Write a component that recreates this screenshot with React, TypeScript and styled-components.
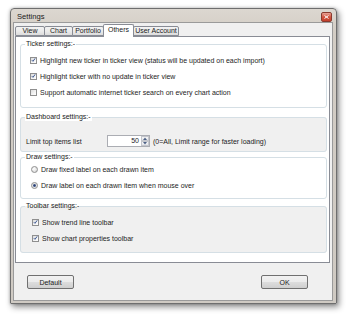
import React from 'react';
import styled, { createGlobalStyle } from 'styled-components';

const GlobalStyle = createGlobalStyle`
  html, body {
    margin: 0;
    padding: 0;
    background: #ffffff;
  }
  body {
    font-family: "Liberation Sans", Arial, sans-serif;
    color: #1c1c1c;
  }
`;

const FONT = '7px';

const Stage = styled.div`
  width: 350px;
  height: 319px;
  box-sizing: border-box;
  padding: 8px 0 0 10px;
  background: #ffffff;
  overflow: hidden;
`;

const Window = styled.div`
  width: 327px;
  height: 296px;
  box-sizing: border-box;
  display: flex;
  flex-direction: column;
  border: 1px solid #6e6e6e;
  border-radius: 4px 4px 1px 1px;
  background: linear-gradient(180deg, #dcd7d0 0%, #d3cdc5 8%, #cfcac3 100%);
  box-shadow: 2px 3px 6px rgba(0, 0, 0, 0.45), 0 0 3px rgba(0, 0, 0, 0.25);
  padding: 0 3px 2px 2px;
`;

const TitleBar = styled.div`
  height: 13px;
  display: flex;
  align-items: center;
  justify-content: space-between;
  padding: 0 0 0 4px;
`;

const Title = styled.span`
  font-size: 7.6px;
  color: #1a1a1a;
  padding-top: 2px;
`;

const CloseButton = styled.div`
  width: 9px;
  height: 8px;
  margin-top: 3px;
  margin-right: 1px;
  border: 1px solid #8a3a2e;
  border-radius: 2px;
  background: linear-gradient(180deg, #e8a396 0%, #d2543f 50%, #c4402c 100%);
  display: flex;
  align-items: center;
  justify-content: center;
`;

const Client = styled.div`
  flex: 1;
  display: flex;
  flex-direction: column;
  background: #f0f0f0;
  border: 1px solid #9a9a9a;
  padding: 1px 2px 0 1px;
`;

const TabRow = styled.div`
  height: 13px;
  display: flex;
  align-items: flex-start;
  margin-bottom: -1px;
  padding-left: 1px;
`;

const Tab = styled.div<{ $active?: boolean; $width: number }>`
  position: relative;
  z-index: ${p => (p.$active ? 1 : 0)};
  box-sizing: border-box;
  width: ${p => p.$width}px;
  height: ${p => (p.$active ? 13 : 10)}px;
  margin-top: ${p => (p.$active ? 0 : 2)}px;
  margin-left: -1px;
  border: 1px solid #898c95;
  border-bottom: ${p => (p.$active ? 'none' : '1px solid #898c95')};
  border-radius: 2px 2px 0 0;
  background: ${p =>
    p.$active ? '#ffffff' : 'linear-gradient(180deg, #f3f3f3 0%, #ebebeb 50%, #dcdcdc 100%)'};
  font-size: ${FONT};
  line-height: 8px;
  display: flex;
  justify-content: center;
  padding-top: ${p => (p.$active ? 1 : 0)}px;
  color: #1a1a1a;
  white-space: nowrap;
`;

const Panel = styled.div`
  height: 227px;
  box-sizing: border-box;
  background: #ffffff;
  border: 1px solid #898c95;
  padding: 3px 2px 0 4px;
  display: flex;
  flex-direction: column;
`;

const Group = styled.fieldset<{ $grey?: boolean; $height: number; $top: number }>`
  box-sizing: border-box;
  height: ${p => p.$height}px;
  margin: ${p => p.$top}px 0 0 0;
  min-width: 0;
  padding: 0;
  border: 1px solid #d5dfe5;
  border-radius: 3px;
  background: ${p => (p.$grey ? '#f0f0f0' : '#ffffff')};
  display: flex;
  flex-direction: column;
`;

const Legend = styled.legend<{ $white?: boolean }>`
  font-size: ${FONT};
  line-height: 8px;
  height: 8px;
  padding: 0 1px;
  margin-left: 4px;
  background: ${p => (p.$white ? '#ffffff' : 'transparent')};
  color: #1a1a1a;
`;

const Rows = styled.div<{ $pt: number; $pl: number }>`
  display: flex;
  flex-direction: column;
  gap: 8px;
  padding: ${p => p.$pt}px 0 0 ${p => p.$pl}px;
`;

const Row = styled.div`
  height: 8px;
  display: flex;
  align-items: center;
  gap: 3px;
  font-size: ${FONT};
  white-space: nowrap;
`;

const Box = styled.span`
  width: 7px;
  height: 7px;
  box-sizing: border-box;
  border: 1px solid #8f8f8f;
  background: linear-gradient(135deg, #dcdcdc 0%, #f4f4f4 60%, #ffffff 100%);
  display: flex;
  align-items: center;
  justify-content: center;
  flex-shrink: 0;
`;

const RadioDot = styled.span<{ $on?: boolean }>`
  width: 7px;
  height: 7px;
  box-sizing: border-box;
  border-radius: 50%;
  border: 1px solid #8f8f8f;
  background: ${p =>
    p.$on
      ? 'radial-gradient(circle, #2d3f6a 0%, #4b6296 35%, #dedede 45%, #f6f6f6 100%)'
      : 'radial-gradient(circle at 35% 35%, #ffffff 0%, #e2e2e2 60%, #cfcfcf 100%)'};
  flex-shrink: 0;
  margin-left: 1px;
`;

const LimitRow = styled.div`
  display: flex;
  align-items: center;
  font-size: ${FONT};
  white-space: nowrap;
  padding: 14px 0 0 5px;
`;

const LimitLabel = styled.span`
  width: 81px;
`;

const Spinner = styled.div`
  width: 43px;
  height: 12px;
  box-sizing: border-box;
  border: 1px solid #abadb3;
  background: #ffffff;
  display: flex;
  margin-right: 3px;
`;

const SpinValue = styled.span`
  flex: 1;
  text-align: right;
  padding-right: 2px;
  font-size: ${FONT};
  line-height: 10px;
`;

const SpinButtons = styled.div`
  width: 8px;
  display: flex;
  flex-direction: column;
`;

const SpinButton = styled.div`
  flex: 1;
  border: 1px solid #c4c6cc;
  background: linear-gradient(180deg, #f6f6f6, #e3e5ea);
  display: flex;
  align-items: center;
  justify-content: center;
`;

const ButtonBar = styled.div`
  flex: 1;
  display: flex;
  justify-content: space-between;
  align-items: flex-start;
  padding: 12px 22px 0 12px;
`;

const PushButton = styled.button`
  width: 47px;
  height: 14px;
  box-sizing: border-box;
  border: 1px solid #707070;
  border-radius: 2px;
  background: linear-gradient(180deg, #f2f2f2 0%, #ebebeb 50%, #dddddd 51%, #cfcfcf 100%);
  font-family: "Liberation Sans", Arial, sans-serif;
  font-size: ${FONT};
  color: #1a1a1a;
  padding: 0;
`;

const Check = () => (
  <svg width="6" height="6" viewBox="0 0 6 6">
    <path d="M1 3.2 L2.4 4.6 L5 1" fill="none" stroke="#3d5790" strokeWidth="1.2" />
  </svg>
);

const CheckItem: React.FC<{ checked?: boolean; label: string }> = ({ checked, label }) => (
  <Row>
    <Box>{checked && <Check />}</Box>
    <span>{label}</span>
  </Row>
);

const RadioItem: React.FC<{ on?: boolean; label: string }> = ({ on, label }) => (
  <Row>
    <RadioDot $on={on} />
    <span>{label}</span>
  </Row>
);

const Arrow = ({ up }: { up?: boolean }) => (
  <svg width="4" height="3" viewBox="0 0 4 3">
    <path d={up ? 'M0 3 L2 0.5 L4 3 Z' : 'M0 0 L2 2.5 L4 0 Z'} fill="#4d6185" />
  </svg>
);

const tabs = [
  { label: 'View', width: 30 },
  { label: 'Chart', width: 29 },
  { label: 'Portfolio', width: 32 },
  { label: 'Others', width: 31, active: true },
  { label: 'User Account', width: 46 },
];

const App: React.FC = () => (
  <>
    <GlobalStyle />
    <Stage>
      <Window>
        <TitleBar>
          <Title>Settings</Title>
          <CloseButton>
            <svg width="5" height="4" viewBox="0 0 5 4">
              <path d="M0.5 0.5 L4.5 3.5 M4.5 0.5 L0.5 3.5" stroke="#ffffff" strokeWidth="1" />
            </svg>
          </CloseButton>
        </TitleBar>
        <Client>
          <TabRow>
            {tabs.map(t => (
              <Tab key={t.label} $active={t.active} $width={t.width}>
                {t.label}
              </Tab>
            ))}
          </TabRow>
          <Panel>
            <Group $height={68} $top={0}>
              <Legend>Ticker settings:-</Legend>
              <Rows $pt={8} $pl={9}>
                <CheckItem checked label="Highlight new ticker in ticker view (status will be updated on each import)" />
                <CheckItem checked label="Highlight ticker with no update in ticker view" />
                <CheckItem label="Support automatic internet ticker search on every chart action" />
              </Rows>
            </Group>
            <Group $grey $height={39} $top={5}>
              <Legend $white>Dashboard settings:-</Legend>
              <LimitRow>
                <LimitLabel>Limit top items list</LimitLabel>
                <Spinner>
                  <SpinValue>50</SpinValue>
                  <SpinButtons>
                    <SpinButton>
                      <Arrow up />
                    </SpinButton>
                    <SpinButton>
                      <Arrow />
                    </SpinButton>
                  </SpinButtons>
                </Spinner>
                <span>(0=All, Limit range for faster loading)</span>
              </LimitRow>
            </Group>
            <Group $height={46} $top={1}>
              <Legend>Draw settings:-</Legend>
              <Rows $pt={4} $pl={9}>
                <RadioItem label="Draw fixed label on each drawn item" />
                <RadioItem on label="Draw label on each drawn item when mouse over" />
              </Rows>
            </Group>
            <Group $grey $height={51} $top={3}>
              <Legend>Toolbar settings:-</Legend>
              <Rows $pt={8} $pl={11}>
                <CheckItem checked label="Show trend line toolbar" />
                <CheckItem checked label="Show chart properties toolbar" />
              </Rows>
            </Group>
          </Panel>
          <ButtonBar>
            <PushButton>Default</PushButton>
            <PushButton>OK</PushButton>
          </ButtonBar>
        </Client>
      </Window>
    </Stage>
  </>
);

export default App;
